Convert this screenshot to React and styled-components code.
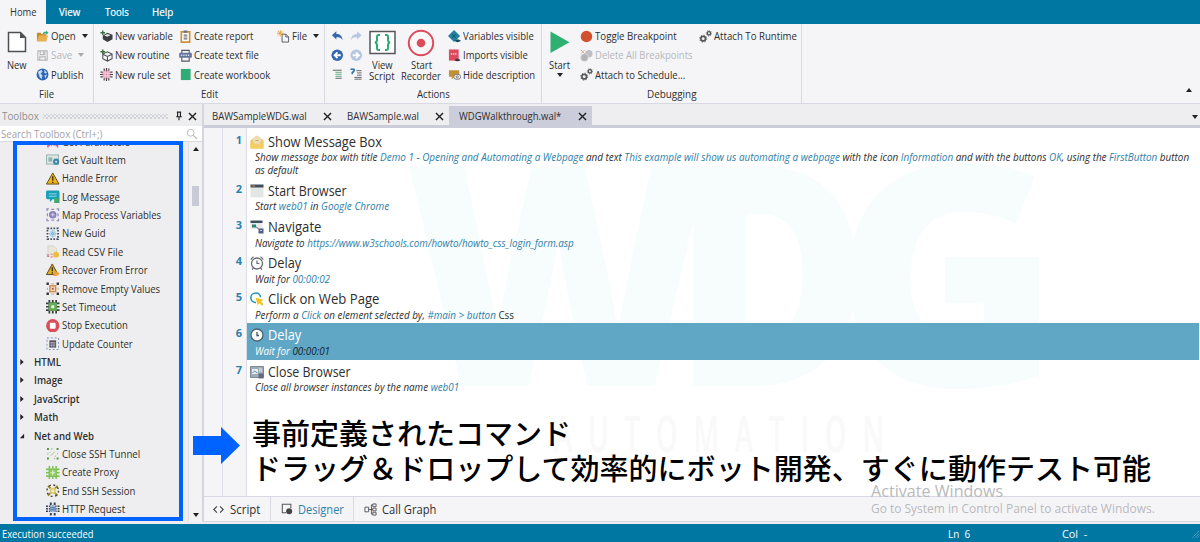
import { useLayoutEffect, useRef, useState } from 'react';
import styled, { createGlobalStyle, css } from 'styled-components';

const blue = '#0077a3';
const panel = '#f5f5f8';
const line = '#d9d9e4';
const lavender = '#cccddb';
const link = '#2d80aa';

const GlobalStyle = createGlobalStyle`
  * {
    box-sizing: border-box;
  }

  body {
    margin: 0;
    overflow: hidden;
    font-family: 'Open Sans', 'Noto Sans CJK JP', sans-serif;
    font-size: 10.8px;
    line-height: 14px;
    color: #2e2e2e;
  }
`;

const Window = styled.div`
  position: relative;
  width: 1200px;
  height: 542px;
  display: flex;
  flex-direction: column;
  background: #eeeef0;
  overflow: hidden;
`;

/* ---------- text ---------- */

const FitBox = styled.span`
  display: block;
  flex: none;
  width: ${({ $w }) => $w}px;
  text-align: left;
`;

const FitSpan = styled.span`
  display: inline-block;
  white-space: pre;
  transform-origin: 0 50%;
`;

// Condenses a label so that it takes up exactly `width` pixels.
function Fit({ width, children }) {
  const ref = useRef(null);
  const [scale, setScale] = useState(1);

  useLayoutEffect(() => {
    setScale(width / ref.current.offsetWidth);
  }, [width]);

  return (
    <FitBox $w={width}>
      <FitSpan ref={ref} style={{ transform: `scaleX(${scale})` }}>
        {children}
      </FitSpan>
    </FitBox>
  );
}

/* ---------- menu ---------- */

const MenuBar = styled.nav`
  display: flex;
  flex: none;
  height: 24px;
  background: ${blue};
`;

const MenuTab = styled.div`
  width: ${({ $w }) => $w}px;
  display: flex;
  align-items: center;
  justify-content: center;
  background: ${({ $active }) => ($active ? panel : 'transparent')};
  color: ${({ $active }) => ($active ? '#333' : '#fff')};
  -webkit-text-stroke: ${({ $active }) => ($active ? '0' : '0.2px')};
`;

/* ---------- ribbon ---------- */

const Ribbon = styled.header`
  display: flex;
  flex: none;
  height: 80px;
  background: ${panel};
  border-bottom: 1px solid ${line};
`;

const Group = styled.section`
  width: ${({ $w }) => $w}px;
  display: flex;
  flex-direction: column;
  border-right: 1px solid ${line};
`;

const GroupBody = styled.div`
  display: flex;
  height: 61px;
  padding: 2.5px 0 0 ${({ $pad }) => $pad || 0}px;
`;

const GroupLabel = styled.div`
  height: 18px;
  display: flex;
  align-items: center;
  justify-content: center;
`;

const Column = styled.div`
  width: ${({ $w }) => $w}px;
  margin-left: ${({ $gap }) => $gap || 0}px;
  display: flex;
  flex-direction: column;
`;

const Item = styled.div`
  display: flex;
  align-items: center;
  gap: 2px;
  height: 19.3px;
  color: ${({ $off }) => ($off ? '#b7b7bb' : 'inherit')};
`;

const IconBox = styled.span`
  display: flex;
  align-items: center;
  justify-content: center;
  flex: none;
  width: ${({ $w }) => $w || 14}px;
`;

const BigButton = styled.div`
  width: ${({ $w }) => $w}px;
  display: flex;
  flex-direction: column;
  align-items: center;
  padding-top: 3.5px;
  line-height: 11.5px;
`;

const BigIcon = styled.div`
  display: flex;
  align-items: center;
  height: 25px;
  margin-bottom: 3.5px;
`;

const Caret = styled.i`
  width: 0;
  height: 0;
  border: 3px solid transparent;
  border-top: 4px solid ${({ $off }) => ($off ? '#aaa' : '#222')};
  border-bottom: 0;
  margin-left: ${({ $gap }) => $gap || 0}px;
  margin-top: ${({ $top }) => $top || 0}px;
  transform: ${({ $up }) => ($up ? 'rotate(180deg)' : 'none')};
`;

const SmallGrid = styled.div`
  display: grid;
  grid-template-columns: 19px 19px;
  grid-auto-rows: 19.3px;
  place-items: center;
`;

const RibbonEnd = styled.div`
  flex: 1;
  display: flex;
  align-items: flex-end;
  justify-content: flex-end;
  padding: 0 8px 11px 0;
`;

/* ---------- work area ---------- */

const Work = styled.div`
  display: flex;
  flex: 1;
  min-height: 0;
`;

const Sidebar = styled.aside`
  width: 202px;
  display: flex;
  flex-direction: column;
`;

const SideHeader = styled.div`
  height: 22px;
  display: flex;
  align-items: center;
  padding: 2px 1px 0 2px;
  color: #8f8f94;
`;

const Grip = styled.div`
  width: 125px;
  height: 5px;
  margin: 0 6px 0 4px;
  background-image: radial-gradient(#d2d2da 0.7px, transparent 0.9px), radial-gradient(#d2d2da 0.7px, transparent 0.9px);
  background-size: 4px 4px;
  background-position: 0 0, 2px 2px;
`;

const Search = styled.div`
  height: 16px;
  display: flex;
  align-items: center;
  justify-content: space-between;
  padding: 0 4px 0 1px;
  background: #fff;
  border-bottom: 1px solid ${line};
  color: #a2a2a6;
`;

const TreeArea = styled.div`
  flex: 1;
  min-height: 0;
  display: flex;
  overflow: hidden;
`;

const Tree = styled.div`
  flex: 1;
  margin-top: -9.6px;
  overflow: hidden;
`;

const Node = styled.div`
  height: 18.39px;
  display: flex;
  align-items: center;
  gap: 2px;
  padding-left: 46px;

  ${({ $category }) =>
    $category &&
    css`
      gap: 9px;
      padding-left: 19px;
      font-weight: 600;
    `}
`;

const Scrollbar = styled.div`
  width: 14px;
  display: flex;
  flex-direction: column;
  align-items: center;
  padding: 5px 0;
  background: #f3f3f6;
  border-left: 1px solid #e0e0e8;
`;

const Thumb = styled.div`
  width: 7px;
  height: 20px;
  margin: 35px 0 auto;
  background: #c9cad8;
`;

const Editor = styled.main`
  flex: 1;
  min-width: 0;
  display: flex;
  flex-direction: column;
  border-left: 2px solid #d5d5e0;
`;

const FileTabs = styled.div`
  flex: none;
  display: flex;
  height: 24px;
  padding-top: 2px;
  border-bottom: 3px solid ${lavender};
`;

const FileTab = styled.div`
  display: flex;
  align-items: center;
  justify-content: space-between;
  width: ${({ $w }) => $w}px;
  padding: 1px ${({ $end }) => $end || 5}px 0 ${({ $pad }) => $pad}px;
  background: ${({ $active }) => ($active ? lavender : 'transparent')};
`;

const TabsMenu = styled.div`
  display: flex;
  align-items: center;
  margin-left: auto;
  padding: 2px 2px 0 0;
`;

const Canvas = styled.div`
  position: relative;
  flex: 1;
  min-height: 0;
  display: flex;
  background: #fff;
  overflow: hidden;
`;

const Gutter = styled.div`
  width: 19px;
  background: ${panel};
  border-right: 1px solid #dedee6;
`;

const Numbers = styled.div`
  width: 24px;
  padding: 1.5px 4px 0 0;
  background: ${panel};
  border-right: 1px solid #dcdce4;
  text-align: right;
  font-size: 11px;
  font-weight: 700;
  color: ${link};
`;

const StepNumber = styled.div`
  height: ${({ $h }) => $h}px;
  padding-top: 3px;
`;

const Steps = styled.div`
  position: relative;
  flex: 1;
  padding: 1.5px 1px 0 0;
`;

const Step = styled.div`
  height: ${({ $h }) => $h}px;
  padding: 3.5px 0 0 3px;
  background: ${({ $selected }) => ($selected ? 'rgba(82, 158, 192, 0.92)' : 'transparent')};
  color: ${({ $selected }) => ($selected ? '#fff' : 'inherit')};
`;

const StepTitle = styled.div`
  display: flex;
  align-items: center;
  gap: 4px;
  height: 17px;
  font-size: 13.6px;
`;

const StepText = styled.div`
  height: 13px;
  padding-left: 5px;
  font-style: italic;
  line-height: 13px;
`;

const Value = styled.span`
  color: ${({ $dark }) => ($dark ? '#10232e' : link)};
`;

const Plain = styled.span`
  font-style: ${({ $upright }) => ($upright ? 'normal' : 'inherit')};
`;

const Mark = styled.div`
  position: absolute;
  left: ${({ $x }) => $x}px;
  top: ${({ $y }) => $y}px;
  font-size: ${({ $size }) => $size}px;
  line-height: 1;
  font-weight: ${({ $weight }) => $weight};
  letter-spacing: ${({ $track }) => $track || 0}px;
  color: ${({ $color }) => $color};
  transform: scaleX(${({ $scale }) => $scale || 1});
  transform-origin: 0 0;
  white-space: nowrap;
`;

const ViewTabs = styled.div`
  flex: none;
  display: flex;
  height: 26px;
  background: ${panel};
  border-top: 1px solid ${line};
  border-bottom: 1px solid ${line};
  font-size: 11.8px;
`;

const ViewTab = styled.div`
  display: flex;
  align-items: center;
  width: ${({ $w }) => $w}px;
  padding-left: ${({ $pad }) => $pad}px;
  gap: ${({ $gap }) => $gap}px;
  color: ${({ $active }) => ($active ? link : 'inherit')};
  border: solid ${line};
  border-width: ${({ $active }) => ($active ? '0 1px' : '0')};
`;

const StatusBar = styled.footer`
  flex: none;
  display: flex;
  align-items: center;
  height: 18px;
  margin-top: 2px;
  padding: 2px 0 0 2px;
  background: ${blue};
  color: #fff;
`;

const StatusCell = styled.span`
  width: ${({ $w }) => $w}px;
`;

/* ---------- notes above the window ---------- */

const Frame = styled.div`
  position: absolute;
  left: 13px;
  top: 141px;
  width: 170px;
  height: 380px;
  border: 4px solid #0062ff;
`;

const Arrow = styled.svg`
  position: absolute;
  left: 193px;
  top: 426px;
`;

const Caption = styled.div`
  position: absolute;
  left: 252px;
  top: 414.5px;
  font-family: 'Noto Sans CJK JP', sans-serif;
  font-size: 29px;
  font-weight: 500;
  line-height: 35px;
  color: #000;
  white-space: nowrap;
`;

const Activate = styled.div`
  position: absolute;
  left: 871px;
  top: 482px;
  color: #b9b9bc;
  font-size: 12px;
  line-height: 18px;
`;

const ActivateTitle = styled.div`
  font-size: 15.5px;
`;

/* ---------- icons ---------- */

const Svg = ({ s = 14, children, ...rest }) => (
  <svg width={s} height={s} viewBox="0 0 14 14" fill="none" {...rest}>
    {children}
  </svg>
);

const icons = {
  open: (
    <>
      <path d="M1 3h4l1 1.5h5V12H1z" fill="#c98a26" />
      <path d="M1 12l2-6h10l-2 6z" fill="#e9b04e" />
      <path d="M7 4c1-2 3-2.5 4-2V.5L13.5 3 11 5V3.700C9.500 3.500 8.500 4 8 5z" fill="#35ad75" />
    </>
  ),
  save: <path d="M2 2h10v10H2zM4.500 2v4h5V2M4 12V8.500h6V12M8 3v2" stroke="#b6b6ba" strokeWidth="1.200" />,
  globe: (
    <>
      <circle cx="7" cy="7" r="6.400" fill="#2f67b5" />
      <path d="M2 4l4-2 1 2-2 2 2 2-1 4-2-2zM9 2l3 3-2 1-1-1zM9 8l3-1-2 4z" fill="#c7dcef" />
    </>
  ),
  variable: (
    <>
      <path d="M3 6l5-3 5.500 2v5L8 13l-5-3z" fill="#3c3f42" />
      <path d="M4.500 6L8 4.200 11.500 5.500 8 7.300z" fill="#e5e5e8" />
      <path d="M3 .5v5M.500 3h5" stroke="#36703f" strokeWidth="1.500" />
    </>
  ),
  routine: (
    <>
      <path d="M3 5.500L8 3l5 2.500v5L8 13l-5-2.500zM3.500 6L8 8l4.500-2M8 8v5" stroke="#4a4d50" strokeWidth="1.100" />
      <path d="M3 .500v5M.500 3h5" stroke="#36703f" strokeWidth="1.500" />
    </>
  ),
  ruleset: (
    <>
      <circle cx="7" cy="7" r="4.500" fill="#e08aa8" />
      <path d="M5.500 3v8M8.500 3v8M3 5.500h8M3 8.500h8" stroke="#f8e3ea" strokeWidth=".9" />
      <path d="M.5 4.500h2.500M0 7h3M.5 9.500h2.500M11 4.500h2.500M11 7h3M11 9.500h2.500M4.500.5V3M7 0v3M9.500.5V3M4.500 11v2.500M7 11v3M9.500 11v2.500" stroke="#4b3b43" strokeWidth="1.300" />
    </>
  ),
  report: (
    <>
      <path d="M2.500 2h9v11h-9z" fill="#fff" stroke="#cc9339" strokeWidth="1.800" />
      <path d="M5 .5h4v2.500H5z" fill="#717376" />
      <path d="M5 5.500h4M5 7.500h4M5 9.500h4" stroke="#717376" strokeWidth="1.200" />
    </>
  ),
  textfile: (
    <>
      <path d="M3 5V1.500h8V5M3 9v4h8V9" stroke="#56585d" strokeWidth="1.200" />
      <rect x=".200" y="4" width="13.600" height="5.500" rx="1" fill="#64749f" />
      <path d="M2 6.800h10" stroke="#d4daea" strokeDasharray="1.500 1" strokeWidth="1.700" />
    </>
  ),
  workbook: <path d="M2 1h10.500v12H2z" fill="#2fac75" />,
  file: (
    <>
      <path d="M5.500 4.500h4l3 3v5.500h-7zM9.500 4.500v3h3" stroke="#55575b" />
      <path d="M3.500 0v7M0 3.500h7M1 1l5 5M6 1L1 6" stroke="#e4a33a" />
    </>
  ),
  undo: <path d="M1 6l5-4.500v3c4 0 6.500 2 7 7C11.500 8.500 9.500 8 6 8v2.500z" fill="#3567b0" />,
  redo: <path d="M13 6L8 1.500v3c-4 0-6.500 2-7 7C2.500 8.500 4.500 8 8 8v2.500z" fill="#b9c9e3" />,
  back: (
    <>
      <circle cx="7" cy="7" r="6.500" fill="#3567b0" />
      <path d="M11 7H4M7.300 3.800L4 7l3.300 3.200" stroke="#fff" strokeWidth="2" />
    </>
  ),
  forward: (
    <>
      <circle cx="7" cy="7" r="6.500" fill="#b5c6e1" />
      <path d="M3 7h7M6.700 3.800L10 7l-3.300 3.200" stroke="#fff" strokeWidth="2" />
    </>
  ),
  indent: (
    <>
      <path d="M2 2.500h10M5 11.500h7" stroke="#555" />
      <path d="M5 4.800h7M5 7h7M5 9.300h7" stroke="#55a477" />
    </>
  ),
  uncomment: (
    <>
      <path d="M7 3h6M8 5.500h5M8 8h5M5 10.500h8M5 12.500h8" stroke="#555" />
      <path d="M.5 1.500h4q1 2-2 3.500v2" stroke="#2a6fa8" strokeWidth="1.700" />
    </>
  ),
  diamond: (
    <>
      <path d="M6.500 0L13 6.500l-6.500 6.500L0 6.500z" fill="#23829f" />
      <path d="M4 4l5 5M9 4L4 9" stroke="#0b5d79" />
      <path d="M7 11.700q3.200-3.500 7 0-3.800 3-7 0z" fill="#174b63" />
    </>
  ),
  imports: (
    <>
      <path d="M1 .5h10.500v12H1z" fill="#dc4b5d" />
      <path d="M3 5.500h7" stroke="#f9d6da" strokeDasharray="1.500 .8" strokeWidth="1.600" />
      <path d="M7 12q3-3 6.500 0-3.500 2.500-6.500 0z" fill="#4a2a3e" />
    </>
  ),
  hide: (
    <>
      <path d="M1 2.500h11v7H7l-3 3v-3H1z" fill="#c3912f" />
      <ellipse cx="10" cy="9.500" rx="3.800" ry="2.800" fill="#f5f5f8" stroke="#777" />
      <circle cx="10" cy="9.500" r="1.200" stroke="#777" />
    </>
  ),
  dot: <circle cx="7" cy="7" r="6.200" fill="#d2522f" />,
  deleteAll: (
    <>
      <circle cx="9.500" cy="5" r="4" fill="#c0c0c4" />
      <circle cx="4.800" cy="9.200" r="4.200" fill="#b3b3b8" stroke="#f5f5f8" strokeWidth=".5" />
      <path d="M1 1l4 4M5 1L1 5" stroke="#dfa590" />
    </>
  ),
  gears: (
    <>
      <circle cx="4.500" cy="9.300" r="2.500" stroke="#55575a" strokeWidth="1.800" />
      <circle cx="4.500" cy="9.300" r="3.800" stroke="#55575a" strokeDasharray="1.300 1.680" />
      <circle cx="10.700" cy="3.600" r="1.800" stroke="#55575a" strokeWidth="1.500" />
      <circle cx="10.700" cy="3.600" r="2.900" stroke="#55575a" strokeDasharray="1 1.200" />
    </>
  ),
  params: <path d="M2 13v-2h2M10 11h2v2M3 8l3 3M11 8l-3 3" stroke="#d65a93" strokeWidth="1.500" />,
  vault: (
    <>
      <rect x=".500" y="2" width="12.500" height="9.500" fill="#dbe7e4" stroke="#9db0b0" />
      <path d="M2.500 4.500h4v4.500h-4z" fill="#8fb6ae" />
      <circle cx="10.500" cy="9" r="3.200" fill="#3c86ac" />
      <circle cx="10.500" cy="9" r="1" fill="#e5f0f5" />
    </>
  ),
  warn: (
    <>
      <path d="M7 1L13.500 12.500H.5z" fill="#f1b51c" stroke="#5e4b1b" strokeLinejoin="round" />
      <path d="M7 4.500V9M7 10v1.500" stroke="#3a3116" strokeWidth="1.400" />
    </>
  ),
  recover: (
    <>
      <path d="M6.500 1L12.500 12H.5z" fill="#e2b022" stroke="#514427" strokeLinejoin="round" />
      <path d="M6.500 4.500v4M6.500 9.500V11" stroke="#3a3116" strokeWidth="1.400" />
      <path d="M8 10q3-3 6 1l-3 2.500H8z" fill="#f0a33c" />
    </>
  ),
  log: (
    <>
      <path d="M1.500.5h11Q14 .5 14 2v7.500H7l-3 3v-3H1.500Q0 9.500 0 8V2Q0 .5 1.500.5z" fill="#1aa0b8" />
      <path d="M3 4h8M3 6.500h8" stroke="#8fdbe5" />
      <path d="M8.500 8.500H14v5H8.500z" fill="#42a96a" />
    </>
  ),
  map: (
    <>
      <circle cx="7" cy="7" r="3.900" fill="#8981bd" />
      <path d="M5 7h4M7 5v4" stroke="#d6d2ec" />
      <path d="M1 3V1h2M11 1h2v2M13 11v2h-2M3 13H1v-2M5.500 1.500h3M5.500 12.500h3M1.500 5.500v3M12.500 5.500v3" stroke="#938db9" strokeWidth="1.300" />
    </>
  ),
  guid: (
    <>
      <rect x="1.500" y="1.500" width="11" height="11" stroke="#3f4f62" strokeWidth="1.800" strokeDasharray="1.700 1.440" />
      <rect x="4" y="4" width="6" height="6" fill="#b9d7e8" />
      <path d="M7 3v8M3 7h8" stroke="#68a1c0" strokeDasharray="1.200 1" />
    </>
  ),
  csv: (
    <>
      <path d="M2 1h6l3 3v8H2z" fill="#e9e7dc" stroke="#d1cfc4" strokeWidth=".8" />
      <path d="M1 9.500l2 3M3 9.500l-2 3M5 9.500h2M5 12.500h2" stroke="#dd7595" />
      <circle cx="10.500" cy="10" r="3" fill="#efbd3a" />
    </>
  ),
  remove: (
    <>
      <path d="M.5.5H3V3H.5zM11 .5h2.500V3H11zM.5 11H3v2.500H.5zM11 11h2.500v2.500H11z" fill="#333" />
      <path d="M5.500 2h3M5.500 12.500h3M1.500 6v2M12.500 6v2" stroke="#cf9b73" />
      <rect x="4" y="4" width="6" height="6" fill="#f3dec9" stroke="#d0894c" strokeWidth="1.500" />
      <rect x="6" y="6" width="2" height="2" fill="#a96431" />
    </>
  ),
  timeout: (
    <>
      <path d="M0 3.500h14M0 7h14M0 10.500h14M3.500 0v14M7 0v14M10.500 0v14" stroke="#393e39" strokeWidth="1.800" />
      <rect x="2.700" y="2.700" width="8.600" height="8.600" fill="#67ad57" />
      <rect x="5.500" y="5.500" width="3" height="3" fill="#e7f2e3" />
    </>
  ),
  stop: (
    <>
      <circle cx="7" cy="7" r="6.900" fill="#d94e5d" />
      <rect x="4" y="4" width="6" height="6" rx="1" fill="#fff" />
    </>
  ),
  counter: (
    <>
      <rect x="1" y="1" width="12" height="12" stroke="#7d8fb9" strokeDasharray="2 2" />
      <rect x="3.500" y="3.500" width="7" height="7.500" fill="#4a4c58" />
      <path d="M4 6h6M4 8.500h6M6 5v6M8.300 5v6" stroke="#c9cad3" strokeWidth=".7" />
    </>
  ),
  tunnel: (
    <>
      <path d="M1 1h2v2H1zM11 1h2v2h-2zM1 11h2v2H1zM11 11h2v2h-2z" fill="#53923e" />
      <path d="M5 9l4-4M4 6l1-1M9 10l1.500-1M5 2h2M8 12h1.500M2 6v2M12 6v1.500" stroke="#9bc183" />
    </>
  ),
  proxy: (
    <>
      <path d="M0 3.500h14M0 7h14M0 10.500h14M3.500 0v14M7 0v14M10.500 0v14" stroke="#7fc154" strokeWidth="1.600" />
      <rect x="4" y="4" width="6" height="6" fill="#8ccb60" />
      <path d="M7 4.500v5M4.500 7h5" stroke="#e3f3d7" strokeWidth="1.200" />
    </>
  ),
  session: (
    <>
      <path d="M2 2l10 10M12 2L2 12" stroke="#968326" strokeWidth="1.800" />
      <circle cx="7" cy="7" r="6" stroke="#4f4a33" strokeWidth="1.500" strokeDasharray="2 2.700" />
      <rect x="4" y="4" width="6" height="6" fill="#d8cb65" />
      <rect x="5.700" y="5.700" width="2.600" height="2.600" fill="#f4f0d2" />
    </>
  ),
  http: (
    <>
      <path d="M0 4.500h14M0 7h14M0 9.500h14" stroke="#333a46" strokeWidth="1.500" strokeDasharray="2 1" />
      <path d="M4 .5h2V3H4zM8 .5h2V3H8zM4 11.500h2V14H4zM8 11.500h2V14H8z" fill="#35435a" />
      <path d="M4 4h6v6.500H4z" fill="#96b9db" />
      <path d="M4 6h6M4 8.200h6" stroke="#486f9d" />
    </>
  ),
  envelope: (
    <>
      <path d="M.5 5.500L7 .5l6.500 5V13.500H.5z" fill="#edc555" />
      <circle cx="7" cy="5.300" r="4.300" fill="#f0dcb4" />
      <path d="M.5 6.500L7 10.500l6.500-4v7H.5z" fill="#f4ce63" />
      <path d="M5.500 5.500h3" stroke="#cfa66d" />
    </>
  ),
  browser: (
    <>
      <path d="M.5 1h13v12.500H.5z" fill="#e4e6e6" />
      <path d="M.5.500h13v3H.5z" fill="#3e4f5e" />
      <path d="M1.500 2h1" stroke="#d9684a" strokeWidth="1.500" />
      <path d="M3.500 2h1" stroke="#e9b84b" strokeWidth="1.500" />
    </>
  ),
  navigate: (
    <>
      <path d="M.5 1h12v8H.5z" fill="#e6eaea" />
      <path d="M.5.500h12v2.500H.5z" fill="#3e4f5e" />
      <path d="M2 4.500h4v3H2z" fill="#35816f" />
      <path d="M6 6.500l3 3" stroke="#557" />
      <path d="M8.500 8.500h5v5h-5z" fill="#555d86" />
      <path d="M10 10.500h2" stroke="#c8cce0" />
    </>
  ),
  alarm: (
    <>
      <circle cx="7" cy="7.500" r="5.500" stroke="#686a78" strokeWidth="1.300" />
      <path d="M.7 3.500L3.500.7M13.300 3.500L10.500.7M3.500 12L2 13.500M10.500 12l1.500 1.500M7 4.500v3h2.500" stroke="#686a78" strokeWidth="1.200" />
    </>
  ),
  clock: (
    <>
      <circle cx="7" cy="7" r="6" fill="#f6fafb" stroke="#4e6272" strokeWidth="1.300" />
      <path d="M7 4v3.500h2" stroke="#45545f" strokeWidth="1.300" />
    </>
  ),
  click: (
    <>
      <path d="M6 10.500C2.500 10.500.8 8 .8 5.800.8 3 3 1 5.800 1s4.700 2 4.700 4.300" stroke="#2694b8" strokeWidth="1.500" />
      <path d="M5.500 5.500l8 2.300-2.500 1.700 2.500 2.700-1.500 1.500-2.700-2.700-1.500 2.500z" fill="#f3c321" />
    </>
  ),
  closeBrowser: (
    <>
      <path d="M.5 1.500h13v11H.5z" fill="#9eacb7" stroke="#7d8891" />
      <path d="M2 4h6v5H2z" fill="#e5edf2" />
      <path d="M2.500 8l2-2 3 2" stroke="#5591aa" />
      <path d="M9 4h3M9 6h3" stroke="#e5edf2" />
      <path d="M8.500 8.500h5v5h-5z" fill="#646b80" />
    </>
  ),
};

const Icon = ({ name, s }) => <Svg s={s}>{icons[name]}</Svg>;

const Close = ({ s = 9 }) => (
  <Svg s={s}>
    <path d="M1.500 1.500l11 11M12.500 1.500l-11 11" stroke="#222" strokeWidth="2.200" />
  </Svg>
);

/* ---------- data ---------- */

const tree = [
  ['params', 'Get Parameters', 68],
  ['vault', 'Get Vault Item', 64],
  ['warn', 'Handle Error', 56],
  ['log', 'Log Message', 58],
  ['map', 'Map Process Variables', 99],
  ['guid', 'New Guid', 43.5],
  ['csv', 'Read CSV File', 61],
  ['recover', 'Recover From Error', 85.5],
  ['remove', 'Remove Empty Values', 98],
  ['timeout', 'Set Timeout', 54],
  ['stop', 'Stop Execution', 66],
  ['counter', 'Update Counter', 71],
  [null, 'HTML', 27],
  [null, 'Image', 28.5],
  [null, 'JavaScript', 46],
  [null, 'Math', 24],
  [null, 'Net and Web', 60.5, true],
  ['tunnel', 'Close SSH Tunnel', 78],
  ['proxy', 'Create Proxy', 56.5],
  ['session', 'End SSH Session', 73.5],
  ['http', 'HTTP Request', 63],
];

const v = (text, dark) => (
  <Value key={text} $dark={dark}>
    {text}
  </Value>
);

const steps = [
  {
    icon: 'envelope',
    title: 'Show Message Box',
    w: 114,
    h: 49,
    lines: [
      [
        934,
        [
          'Show message box with title ',
          v('Demo 1 - Opening and Automating a Webpage'),
          ' and text ',
          v('This example will show us automating a webpage'),
          ' with the icon ',
          v('Information'),
          ' and with the buttons ',
          v('OK'),
          ', using the ',
          v('FirstButton'),
          ' button',
        ],
      ],
      [43, ['as default']],
    ],
  },
  { icon: 'browser', title: 'Start Browser', w: 79, h: 36.5, lines: [[134, ['Start ', v('web01'), ' in ', v('Google Chrome')]]] },
  {
    icon: 'navigate',
    title: 'Navigate',
    w: 53,
    h: 36,
    lines: [[319, ['Navigate to ', v('https://www.w3schools.com/howto/howto_css_login_form.asp')]]],
  },
  { icon: 'alarm', title: 'Delay', w: 33, h: 36, lines: [[75, ['Wait for ', v('00:00:02')]]] },
  {
    icon: 'click',
    title: 'Click on Web Page',
    w: 111,
    h: 36,
    lines: [
      [
        259,
        [
          'Perform a ',
          v('Click'),
          ' on element selected by, ',
          v('#main > button'),
          <Plain key="css" $upright>
            {' Css'}
          </Plain>,
        ],
      ],
    ],
  },
  { icon: 'clock', title: 'Delay', w: 33, h: 36.5, selected: true, lines: [[75, ['Wait for ', v('00:00:01', true)]]] },
  {
    icon: 'closeBrowser',
    title: 'Close Browser',
    w: 83,
    h: 36,
    lines: [[204, ['Close all browser instances by the name ', v('web01')]]],
  },
];

/* ---------- parts ---------- */

const RibbonItem = ({ icon, label, w, off, caret, caretGap }) => (
  <Item $off={off}>
    <IconBox>
      <Icon name={icon} s={13} />
    </IconBox>
    <Fit width={w}>{label}</Fit>
    {caret && <Caret $off={off} $gap={caretGap} />}
  </Item>
);

function RibbonBar() {
  return (
    <Ribbon>
      <Group $w={94}>
        <GroupBody>
          <BigButton $w={33}>
            <BigIcon>
              <svg width="20" height="24" viewBox="0 0 20 24" fill="none">
                <path d="M1.500 1.500h12l5 5v14h-17z" fill="#fff" stroke="#4d4f52" strokeWidth="1.500" />
                <path d="M13 1.500v5.500h5.500z" fill="#4d4f52" />
              </svg>
            </BigIcon>
            <Fit width={20}>New</Fit>
          </BigButton>
          <Column $w={58} $gap={2}>
            <RibbonItem icon="open" label="Open" w={25} caret caretGap={4} />
            <RibbonItem icon="save" label="Save" w={21} off caret caretGap={4} />
            <RibbonItem icon="globe" label="Publish" w={32.5} />
          </Column>
        </GroupBody>
        <GroupLabel>
          <Fit width={15}>File</Fit>
        </GroupLabel>
      </Group>

      <Group $w={231}>
        <GroupBody $pad={5}>
          <Column $w={79}>
            <RibbonItem icon="variable" label="New variable" w={57.5} />
            <RibbonItem icon="routine" label="New routine" w={54.5} />
            <RibbonItem icon="ruleset" label="New rule set" w={55.5} />
          </Column>
          <Column $w={98}>
            <RibbonItem icon="report" label="Create report" w={59.5} />
            <RibbonItem icon="textfile" label="Create text file" w={64.5} />
            <RibbonItem icon="workbook" label="Create workbook" w={76} />
          </Column>
          <Column $w={48}>
            <RibbonItem icon="file" label="File" w={15} caret caretGap={4} />
          </Column>
        </GroupBody>
        <GroupLabel>
          <Fit width={17}>Edit</Fit>
        </GroupLabel>
      </Group>

      <Group $w={217}>
        <GroupBody $pad={3}>
          <SmallGrid>
            {['undo', 'redo', 'back', 'forward', 'indent', 'uncomment'].map((name) => (
              <Icon key={name} name={name} s={12.5} />
            ))}
          </SmallGrid>
          <BigButton $w={32}>
            <BigIcon>
              <svg width="27" height="25" viewBox="0 0 27 25" fill="none">
                <rect x="1" y="1.500" width="25" height="22" fill="#fff" stroke="#55575a" strokeWidth="1.500" />
                <path
                  d="M11 5H9.500Q8 5 8 7v3q0 2-2 2.500Q8 13 8 15v3q0 2 1.500 2H11M16 5h1.500Q19 5 19 7v3q0 2 2 2.500-2 .500-2 2.500v3q0 2-1.500 2H16"
                  stroke="#2fac75"
                  strokeWidth="2"
                />
              </svg>
            </BigIcon>
            <Fit width={21}>View</Fit>
            <Fit width={26}>Script</Fit>
          </BigButton>
          <BigButton $w={46}>
            <BigIcon>
              <svg width="28" height="28" viewBox="0 0 28 28" fill="none">
                <circle cx="14" cy="14" r="12.200" fill="#f9f6f8" stroke="#dc4b5d" strokeWidth="2" />
                <circle cx="14" cy="14" r="4.300" fill="#dc4b5d" />
              </svg>
            </BigIcon>
            <Fit width={21}>Start</Fit>
            <Fit width={40}>Recorder</Fit>
          </BigButton>
          <Column $w={94} $gap={3}>
            <RibbonItem icon="diamond" label="Variables visible" w={70.5} />
            <RibbonItem icon="imports" label="Imports visible" w={65} />
            <RibbonItem icon="hide" label="Hide description" w={72.5} />
          </Column>
        </GroupBody>
        <GroupLabel>
          <Fit width={33}>Actions</Fit>
        </GroupLabel>
      </Group>

      <Group $w={260}>
        <GroupBody>
          <BigButton $w={35}>
            <BigIcon>
              <svg width="20" height="23" viewBox="0 0 20 23">
                <path d="M.5.500v21.500l19-10.800z" fill="#2fb073" />
              </svg>
            </BigIcon>
            <Fit width={21}>Start</Fit>
            <Caret $top={3} />
          </BigButton>
          <Column $w={119} $gap={2}>
            <RibbonItem icon="dot" label="Toggle Breakpoint" w={81.5} />
            <RibbonItem icon="deleteAll" label="Delete All Breakpoints" w={97.5} off />
            <RibbonItem icon="gears" label="Attach to Schedule..." w={90.5} />
          </Column>
          <Column $w={103}>
            <RibbonItem icon="gears" label="Attach To Runtime" w={83} />
          </Column>
        </GroupBody>
        <GroupLabel>
          <Fit width={49.5}>Debugging</Fit>
        </GroupLabel>
      </Group>

      <RibbonEnd>
        <Caret $up />
      </RibbonEnd>
    </Ribbon>
  );
}

function Toolbox() {
  return (
    <Sidebar>
      <SideHeader>
        <Fit width={36.5}>Toolbox</Fit>
        <Grip />
        <Svg s={10}>
          <path d="M4 1.500h6M5 1.500v6M9 1.500v6M3 8h8M7 8v5" stroke="#222" strokeWidth="1.600" />
        </Svg>
        <IconBox $w={17}>
          <Close />
        </IconBox>
      </SideHeader>
      <Search>
        <Fit width={101}>Search Toolbox (Ctrl+;)</Fit>
        <Svg s={12}>
          <circle cx="5.500" cy="5.500" r="4" stroke="#b5b5ba" />
          <path d="M8.500 8.500L13 13" stroke="#b5b5ba" strokeWidth="1.300" />
        </Svg>
      </Search>
      <TreeArea>
        <Tree>
          {tree.map(([icon, label, w, expanded]) => (
            <Node key={label} $category={!icon}>
              {icon ? (
                <IconBox>
                  <Icon name={icon} s={13.5} />
                </IconBox>
              ) : (
                <Svg s={6}>
                  <path d={expanded ? 'M12 2v10H2z' : 'M3 0l8 7-8 7z'} fill="#222" />
                </Svg>
              )}
              <Fit width={w}>{label}</Fit>
            </Node>
          ))}
        </Tree>
        <Scrollbar>
          <Caret $up />
          <Thumb />
          <Caret />
        </Scrollbar>
      </TreeArea>
    </Sidebar>
  );
}

function StepList() {
  return (
    <Canvas>
      <Mark $x={201} $y={-15} $size={308} $weight={800} $scale={0.955} $color="#f7fcfc">
        W
      </Mark>
      <Mark $x={469} $y={-15} $size={308} $weight={800} $scale={0.87} $color="#f7fcfc">
        D
      </Mark>
      <Mark $x={630} $y={-15} $size={308} $weight={800} $scale={0.99} $color="#f7fcfc">
        G
      </Mark>
      <Mark $x={350} $y={280} $size={50} $weight={600} $scale={0.55} $track={29} $color="#f9f9f9">
        AUTOMATION
      </Mark>
      <Gutter />
      <Numbers>
        {steps.map((step, i) => (
          <StepNumber key={i} $h={step.h}>
            {i + 1}
          </StepNumber>
        ))}
      </Numbers>
      <Steps>
        {steps.map((step, i) => (
          <Step key={i} $h={step.h} $selected={step.selected}>
            <StepTitle>
              <IconBox>
                <Icon name={step.icon} />
              </IconBox>
              <Fit width={step.w}>{step.title}</Fit>
            </StepTitle>
            {step.lines.map(([w, parts], n) => (
              <StepText key={n}>
                <Fit width={w}>{parts}</Fit>
              </StepText>
            ))}
          </Step>
        ))}
      </Steps>
    </Canvas>
  );
}

export default function App() {
  return (
    <Window>
      <GlobalStyle />
      <MenuBar>
        <MenuTab $w={46} $active>
          <Fit width={27}>Home</Fit>
        </MenuTab>
        <MenuTab $w={48}>
          <Fit width={21.5}>View</Fit>
        </MenuTab>
        <MenuTab $w={46}>
          <Fit width={24}>Tools</Fit>
        </MenuTab>
        <MenuTab $w={44}>
          <Fit width={21}>Help</Fit>
        </MenuTab>
      </MenuBar>
      <RibbonBar />
      <Work>
        <Toolbox />
        <Editor>
          <FileTabs>
            <FileTab $w={130} $pad={8} $end={2.5}>
              <Fit width={95}>BAWSampleWDG.wal</Fit>
              <Close />
            </FileTab>
            <FileTab $w={115} $pad={13}>
              <Fit width={72}>BAWSample.wal</Fit>
              <Close />
            </FileTab>
            <FileTab $w={143} $pad={10} $active>
              <Fit width={102}>WDGWalkthrough.wal*</Fit>
              <Close />
            </FileTab>
            <TabsMenu>
              <Caret />
            </TabsMenu>
          </FileTabs>
          <StepList />
          <ViewTabs>
            <ViewTab $w={66} $pad={9} $gap={6}>
              <Svg s={11}>
                <path d="M5 3L1 7l4 4M9 3l4 4-4 4" stroke="#444" strokeWidth="1.400" />
              </Svg>
              <Fit width={30}>Script</Fit>
            </ViewTab>
            <ViewTab $w={84} $pad={10} $gap={5} $active>
              <Svg s={12}>
                <path d="M6 11.500H1.500v-10h10V6" stroke="#555" strokeWidth="1.200" />
                <circle cx="9.500" cy="9.500" r="3.500" fill="#444" />
              </Svg>
              <Fit width={46}>Designer</Fit>
            </ViewTab>
            <ViewTab $w={100} $pad={10} $gap={5}>
              <Svg s={13}>
                <path d="M1 4.500h4v5H1zM5 7h3M8 2v10M8 2h1.500M8 12h1.500M8 7h1.500M9.500 1h3.500v3H9.500zM9.500 5.500h3.500v3H9.500zM9.500 10h3.500v3H9.500z" stroke="#555" />
              </Svg>
              <Fit width={54}>Call Graph</Fit>
            </ViewTab>
          </ViewTabs>
        </Editor>
      </Work>
      <StatusBar>
        <StatusCell $w={946}>
          <Fit width={92}>Execution succeeded</Fit>
        </StatusCell>
        <StatusCell $w={114}>
          <Fit width={22}>{'Ln  6'}</Fit>
        </StatusCell>
        <StatusCell $w={130}>
          <Fit width={25}>{'Col  -'}</Fit>
        </StatusCell>
        <Svg s={8}>
          <path d="M1 13L13 1M6 13l7-7M10 13l3-3" stroke="#8ec3da" strokeDasharray="2 1.500" strokeWidth="1.500" />
        </Svg>
      </StatusBar>

      <Frame />
      <Arrow width="47" height="39" viewBox="0 0 47 39">
        <path d="M0 10h28V1l19 18.500L28 38v-9H0z" fill="#0062ff" />
      </Arrow>
      <Caption>
        <Fit width={319}>事前定義されたコマンド</Fit>
        <Fit width={899}>ドラッグ＆ドロップして効率的にボット開発、すぐに動作テスト可能</Fit>
      </Caption>
      <Activate>
        <ActivateTitle>
          <Fit width={132}>Activate Windows</Fit>
        </ActivateTitle>
        <Fit width={284}>Go to System in Control Panel to activate Windows.</Fit>
      </Activate>
    </Window>
  );
}
